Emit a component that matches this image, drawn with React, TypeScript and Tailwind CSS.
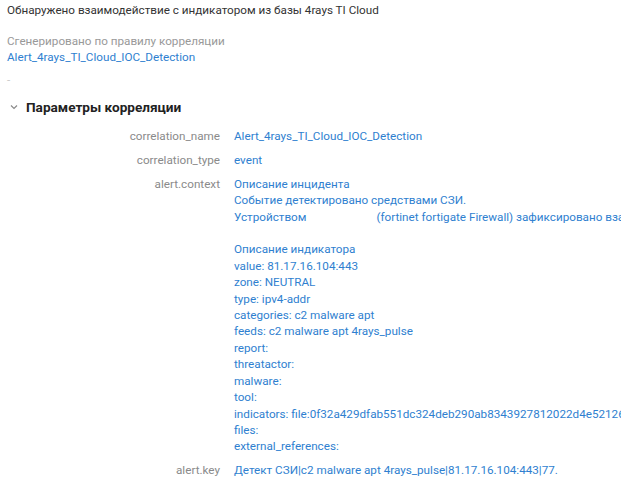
import React from 'react';

const contextLines: React.ReactNode[] = [
  'Описание инцидента',
  'Событие детектировано средствами СЗИ.',
  <>
    Устройством<span className="inline-block w-[70px]" />(fortinet fortigate Firewall) зафиксировано взаимодействие с индикатором
  </>,
  '\u00a0',
  'Описание индикатора',
  'value: 81.17.16.104:443',
  'zone: NEUTRAL',
  'type: ipv4-addr',
  'categories: c2 malware apt',
  'feeds: c2 malware apt 4rays_pulse',
  'report:',
  'threatactor:',
  'malware:',
  'tool:',
  'indicators: file:0f32a429dfab551dc324deb290ab8343927812022d4e5212638a1a8c2de1ec2d',
  'files:',
  'external_references:',
];

function Row({ label, children }: { label: string; children: React.ReactNode }) {
  return (
    <div className="flex gap-[14px]">
      <div className="w-[220px] shrink-0 text-right text-[#8a8a8a]">{label}</div>
      <div className="text-[#2f7fd0] whitespace-nowrap">{children}</div>
    </div>
  );
}

export default function App() {
  return (
    <div
      className="w-[621px] h-[495px] overflow-hidden bg-white text-[11.7px] leading-[16.4px]"
      style={{ fontFamily: 'Roboto, "Noto Sans", sans-serif' }}
    >
      <div className="pt-[2px] px-[7px]">
        <div className="text-[#333] whitespace-nowrap">Обнаружено взаимодействие с индикатором из базы 4rays TI Cloud</div>
        <div className="mt-[14.6px] text-[#999]">Сгенерировано по правилу корреляции</div>
        <div className="text-[#2f7fd0]">Alert_4rays_TI_Cloud_IOC_Detection</div>
        <div className="mt-[6.6px] text-[#c8c8c8] leading-[16.4px]">-</div>
      </div>

      <div className="mt-[8px] flex items-center h-[20px] pl-[10px]">
        <svg width="8" height="6" viewBox="0 0 8 6" className="mr-[8px]">
          <path d="M1 1.5 L4 4.5 L7 1.5" fill="none" stroke="#8a8a8a" strokeWidth="1.2" />
        </svg>
        <span className="text-[13.6px] font-bold text-[#222]">Параметры корреляции</span>
      </div>

      <div className="mt-[11px] flex flex-col gap-[7.6px]">
        <Row label="correlation_name">Alert_4rays_TI_Cloud_IOC_Detection</Row>
        <Row label="correlation_type">event</Row>
        <Row label="alert.context">
          {contextLines.map((l, i) => (
            <div key={i}>{l}</div>
          ))}
        </Row>
        <Row label="alert.key">Детект СЗИ|c2 malware apt 4rays_pulse|81.17.16.104:443|77.</Row>
      </div>
    </div>
  );
}
